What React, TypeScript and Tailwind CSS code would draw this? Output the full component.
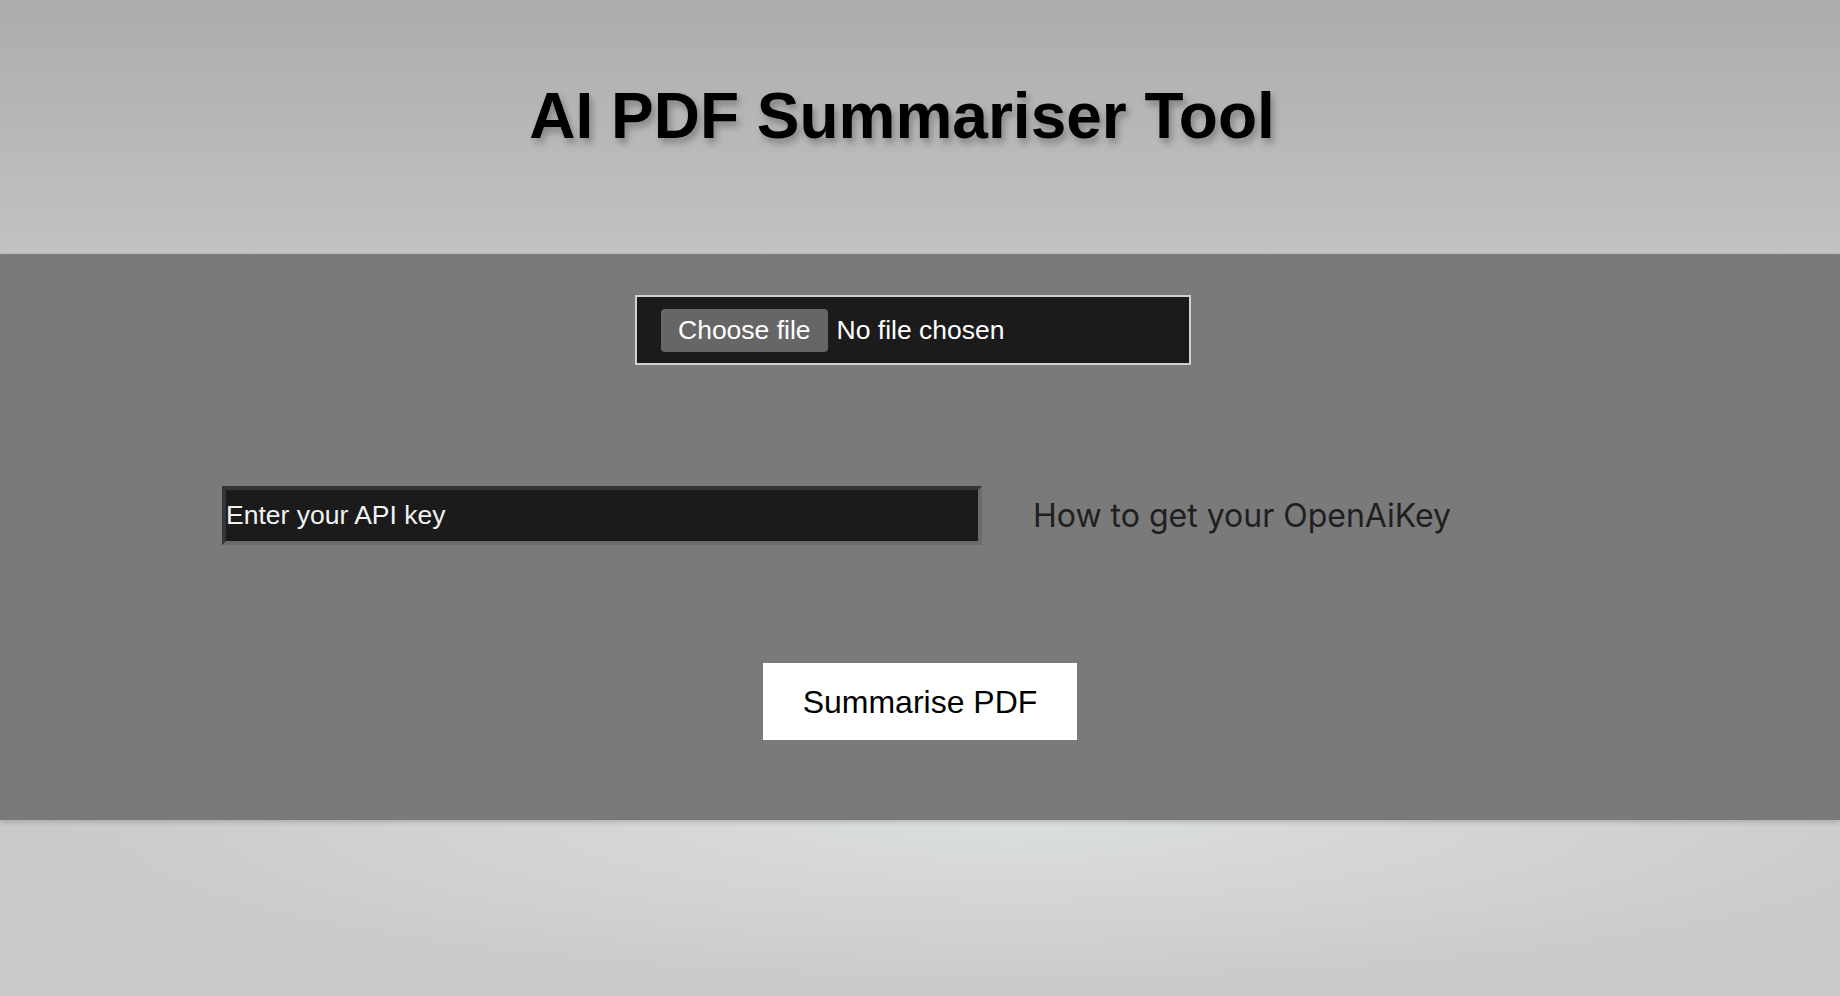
const App = () => {
  return (
    <div className="w-full min-h-[996px] flex flex-col font-['Liberation_Sans',Arial,sans-serif]">
      {/* Header */}
      <header className="h-[254px] pt-[84px] pr-[36px] bg-[linear-gradient(to_bottom,#acacac,#c1c2c1)] flex justify-center">
        <h1 className="text-[64px] leading-none font-bold text-black [text-shadow:3px_5px_7px_rgba(0,0,0,0.28)]">
          AI PDF Summariser Tool
        </h1>
      </header>

      {/* Form band */}
      <main className="h-[566px] bg-[#7a7a7a] flex flex-col pt-[41px] shadow-[0_2px_5px_rgba(0,0,0,0.18)] relative">
        {/* File picker */}
        <div className="flex justify-center pr-[14px]">
          <label className="w-[556px] h-[70px] border-2 border-[#d0d0d0] bg-[#1b1b1b] flex items-center pl-[24px] text-[26.5px] text-white cursor-pointer">
            <span className="h-[43px] px-[17px] rounded-[4px] bg-[#666666] flex items-center leading-none">
              Choose file
            </span>
            <span className="ml-[9px] leading-none">No file chosen</span>
            <input type="file" accept="application/pdf" className="hidden" />
          </label>
        </div>

        {/* API key row */}
        <div className="flex items-center pl-[222px] gap-[51px] mt-[121px]">
          <input
            type="text"
            placeholder="Enter your API key"
            className="w-[760px] h-[59px] border-4 border-t-[#353535] border-l-[#353535] border-r-[#6b6b6b] border-b-[#6b6b6b] bg-[#1b1b1b] p-0 text-[26.5px] text-white placeholder:text-[#f2f2f2] outline-none"
          />
          <a href="#" className="font-['Inter',sans-serif] text-[32px] text-[#1f1f1f] leading-none">
            How to get your OpenAiKey
          </a>
        </div>

        {/* Submit */}
        <div className="flex justify-center mt-[118px]">
          <button className="w-[314px] h-[77px] bg-white text-black text-[32px] leading-none">
            Summarise PDF
          </button>
        </div>
      </main>

      {/* Footer area */}
      <footer className="h-[176px] bg-[radial-gradient(ellipse_at_55%_0%,#dcdfdf,#c9c9c8_70%)]" />
    </div>
  );
};

export default App;
